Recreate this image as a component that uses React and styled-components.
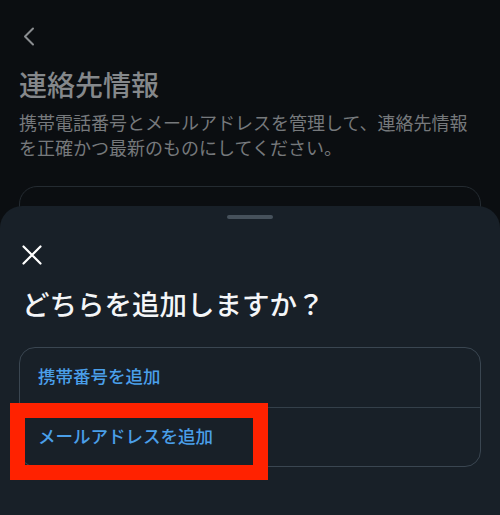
import React from 'react';
import styled, { createGlobalStyle } from 'styled-components';

const options = [
	{ id: 'phone', label: '携帯番号を追加' },
	{ id: 'email', label: 'メールアドレスを追加', highlighted: true },
];

const App = () => {
	return (
		<>
			<GlobalStyle />
			<Screen>
				<Backdrop>
					<BackButton aria-label="戻る">
						<svg width="14" height="19" viewBox="0 0 14 19" fill="none">
							<path d="M11 1.5L3 9.5L11 17.5" stroke="#8a8d90" strokeWidth="2" strokeLinecap="round" strokeLinejoin="round" />
						</svg>
					</BackButton>
					<Title>連絡先情報</Title>
					<Description>
						携帯電話番号とメールアドレスを管理して、連絡先情報を正確かつ最新のものにしてください。
					</Description>
					<GhostCard />
				</Backdrop>

				<Sheet>
					<Handle />
					<CloseButton aria-label="閉じる">
						<svg width="20" height="20" viewBox="0 0 20 20" fill="none">
							<path d="M1.5 1.5L18.5 18.5M18.5 1.5L1.5 18.5" stroke="#ffffff" strokeWidth="2.2" strokeLinecap="round" />
						</svg>
					</CloseButton>
					<Heading>どちらを追加しますか？</Heading>
					<OptionList>
						{options.map((option) => (
							<Option key={option.id}>
								{option.label}
								{option.highlighted && <Highlight />}
							</Option>
						))}
					</OptionList>
				</Sheet>
			</Screen>
		</>
	);
};

const GlobalStyle = createGlobalStyle`
	html, body {
		margin: 0;
		padding: 0;
		background: #0b0e11;
	}

	body {
		font-family: "Noto Sans CJK JP", "Noto Sans", sans-serif;
	}
`;

const Screen = styled.div`
	position: relative;
	width: 500px;
	height: 515px;
	overflow: hidden;
	background: #0b0e11;
`;

const Backdrop = styled.div`
	display: flex;
	flex-direction: column;
	padding: 27px 19px 0;
`;

const BackButton = styled.button`
	display: flex;
	align-items: center;
	width: 20px;
	height: 19px;
	margin-left: 3px;
	padding: 0;
	border: none;
	background: none;
`;

const Title = styled.h1`
	margin: 18px 0 0;
	font-size: 28px;
	line-height: 40px;
	font-weight: 500;
	color: #85888b;
`;

const Description = styled.p`
	margin: 6px 0 0;
	font-size: 18px;
	line-height: 25px;
	font-weight: 400;
	color: #76797c;
`;

const GhostCard = styled.div`
	margin-top: 26px;
	height: 200px;
	border: 1px solid #242b31;
	border-radius: 18px;
`;

const Sheet = styled.div`
	position: absolute;
	left: 0;
	right: 0;
	top: 206px;
	bottom: 0;
	display: flex;
	flex-direction: column;
	padding: 9px 19px 0;
	background: #182028;
	border-radius: 22px 22px 0 0;
`;

const Handle = styled.div`
	align-self: center;
	width: 46px;
	height: 4px;
	border-radius: 2px;
	background: #46515b;
`;

const CloseButton = styled.button`
	display: flex;
	width: 20px;
	height: 20px;
	margin: 26px 0 0 3px;
	padding: 0;
	border: none;
	background: none;
`;

const Heading = styled.h2`
	margin: 20px 0 0 3px;
	font-size: 27.5px;
	line-height: 36px;
	font-weight: 500;
	color: #f4f6f8;
`;

const OptionList = styled.div`
	display: flex;
	flex-direction: column;
	margin-top: 26px;
	border: 1px solid #3a4651;
	border-radius: 16px;
`;

const Option = styled.div`
	position: relative;
	display: flex;
	align-items: center;
	height: 59px;
	padding: 0 18px 4px;
	box-sizing: border-box;
	font-size: 17.5px;
	font-weight: 500;
	color: #4a9fe9;

	& + & {
		border-top: 1px solid #34404a;
	}
`;

const Highlight = styled.div`
	position: absolute;
	left: -10px;
	top: -5px;
	width: 258px;
	height: 77px;
	box-sizing: border-box;
	border: 15px solid #ff2200;
`;

export default App;
